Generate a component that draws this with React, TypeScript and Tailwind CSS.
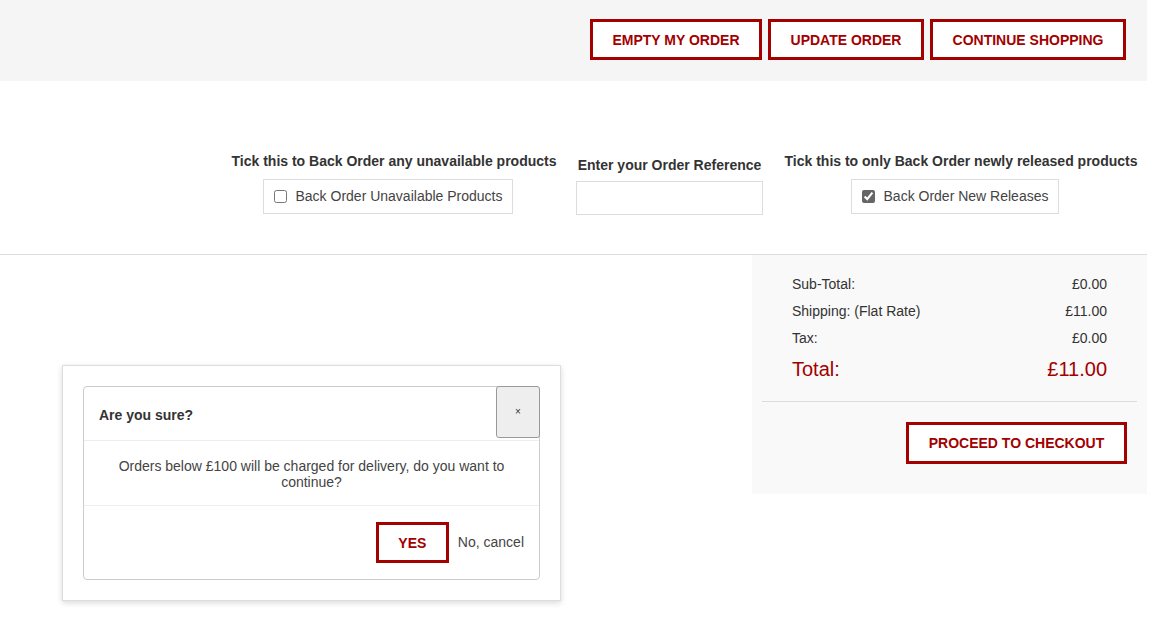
import { useState } from "react";

const redBtn =
  "border-[3px] border-[#a30000] bg-white text-[#a30000] font-bold text-[14px] uppercase leading-none";

export default function App() {
  const [unavailable, setUnavailable] = useState(false);
  const [newReleases, setNewReleases] = useState(true);
  const [ref, setRef] = useState("");

  return (
    <div className="w-[1147px] min-h-[637px] bg-white font-['Liberation_Sans',Arial,sans-serif] text-[#333]">
      {/* top actions */}
      <div className="h-[81px] bg-[#f5f5f5] flex justify-end items-start pt-[19px] pr-[21px] gap-[6px]">
        <button className={`${redBtn} w-[172px] h-[41px]`}>Empty my order</button>
        <button className={`${redBtn} w-[156px] h-[41px]`}>Update order</button>
        <button className={`${redBtn} w-[196px] h-[41px]`}>Continue shopping</button>
      </div>

      {/* order options */}
      <div className="h-[174px] flex justify-end pr-[10px] pt-[70px] border-b border-[#ddd]">
        <div className="w-[324px] flex flex-col items-center">
          <div className="text-[14px] font-bold leading-[20px] h-[28px] whitespace-nowrap">
            Tick this to Back Order any unavailable products
          </div>
          <label className="ml-[-12px] w-[250px] h-[35px] border border-[#ddd] flex items-center justify-center gap-[9px] text-[14px] text-[#444]">
            <input
              type="checkbox"
              checked={unavailable}
              onChange={(e) => setUnavailable(e.target.checked)}
              className="w-[13px] h-[13px] accent-[#666]"
            />
            Back Order Unavailable Products
          </label>
        </div>
        <div className="ml-[20px] w-[187px] flex flex-col items-center">
          <div className="text-[14px] font-bold leading-[20px] h-[30px] pt-[4px] whitespace-nowrap">
            Enter your Order Reference
          </div>
          <input
            value={ref}
            onChange={(e) => setRef(e.target.value)}
            className="w-[187px] h-[34px] border border-[#ddd] px-2 text-[14px]"
          />
        </div>
        <div className="ml-[22px] w-[352px] flex flex-col items-center">
          <div className="text-[14px] font-bold leading-[20px] h-[28px] whitespace-nowrap">
            Tick this to only Back Order newly released products
          </div>
          <label className="ml-[-12px] w-[208px] h-[35px] border border-[#ddd] flex items-center justify-center gap-[9px] text-[14px] text-[#444]">
            <input
              type="checkbox"
              checked={newReleases}
              onChange={(e) => setNewReleases(e.target.checked)}
              className="w-[13px] h-[13px] accent-[#666]"
            />
            Back Order New Releases
          </label>
        </div>
      </div>

      {/* bottom area */}
      <div className="flex">
        <div className="flex-1 pt-[110px] pl-[62px]">
          <div className="w-[499px] h-[236px] bg-white border border-[#ddd] shadow-[0_2px_6px_rgba(0,0,0,0.15)] p-[20px]">
            <div className="border border-[#ccc] rounded-[4px] bg-white">
              <div className="flex items-start justify-between border-b border-[#eee] h-[54px]">
                <div className="pl-[15px] pt-[18px] text-[14px] font-bold text-[#333]">Are you sure?</div>
                <button className="mt-[-1px] mr-[-1px] w-[44px] h-[52px] bg-[#eee] border border-[#999] rounded-[3px] text-[10px] text-[#333] leading-none">
                  ×
                </button>
              </div>
              <div className="px-[30px] pt-[17px] pb-[15px] border-b border-[#eee] text-center text-[14px] leading-[16px] text-[#444]">
                Orders below £100 will be charged for delivery, do you want to continue?
              </div>
              <div className="flex justify-end items-center gap-[9px] pt-[16px] pb-[16px] pr-[15px]">
                <button className={`${redBtn} w-[73px] h-[41px]`}>Yes</button>
                <span className="text-[14px] text-[#444]">No, cancel</span>
              </div>
            </div>
          </div>
        </div>

        <div className="w-[395px] h-[239px] bg-[#f9f9f9] px-[10px] pt-[21px]">
          <div className="px-[30px] text-[14px] text-[#333]">
            <div className="flex justify-between h-[27px] leading-[17px]">
              <span>Sub-Total:</span>
              <span>£0.00</span>
            </div>
            <div className="flex justify-between h-[27px] leading-[17px]">
              <span>Shipping: (Flat Rate)</span>
              <span>£11.00</span>
            </div>
            <div className="flex justify-between h-[27px] leading-[17px]">
              <span>Tax:</span>
              <span>£0.00</span>
            </div>
            <div className="flex justify-between text-[20px] leading-[24px] text-[#a30000] pb-[20px]">
              <span>Total:</span>
              <span>£11.00</span>
            </div>
          </div>
          <div className="border-t border-[#ddd] flex justify-end pt-[20px] pr-[10px]">
            <button className={`${redBtn} w-[221px] h-[42px]`}>Proceed to checkout</button>
          </div>
        </div>
      </div>
    </div>
  );
}
